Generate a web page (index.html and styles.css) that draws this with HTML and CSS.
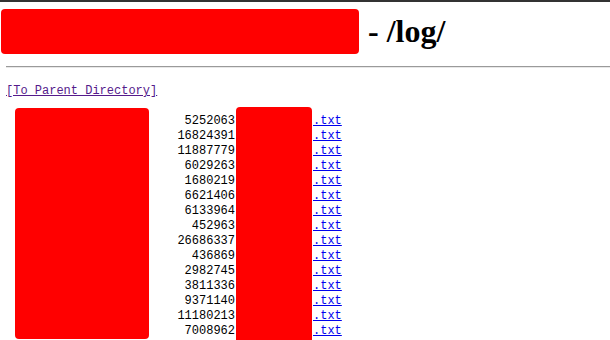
FILE: index.html
```html
<!DOCTYPE html>
<html lang="en">

<head>
    <meta charset="UTF-8">
    <title>/log/</title>
    <link rel="stylesheet" href="styles.css">
</head>

<body>
    <h1 class="title">
        <span class="redact host"></span>
        <span class="path">- /log/</span>
    </h1>
    <hr class="rule">

    <div class="parent"><a href="/">[To Parent Directory]</a></div>

    <div class="listing">
        <div class="redact dates"></div>
        <div class="sizes">
            <div>5252063</div>
            <div>16824391</div>
            <div>11887779</div>
            <div>6029263</div>
            <div>1680219</div>
            <div>6621406</div>
            <div>6133964</div>
            <div>452963</div>
            <div>26686337</div>
            <div>436869</div>
            <div>2982745</div>
            <div>3811336</div>
            <div>9371140</div>
            <div>11180213</div>
            <div>7008962</div>
        </div>
        <div class="redact names"></div>
        <div class="files">
            <a href="#">.txt</a>
            <a href="#">.txt</a>
            <a href="#">.txt</a>
            <a href="#">.txt</a>
            <a href="#">.txt</a>
            <a href="#">.txt</a>
            <a href="#">.txt</a>
            <a href="#">.txt</a>
            <a href="#">.txt</a>
            <a href="#">.txt</a>
            <a href="#">.txt</a>
            <a href="#">.txt</a>
            <a href="#">.txt</a>
            <a href="#">.txt</a>
            <a href="#">.txt</a>
        </div>
    </div>
</body>

</html>
```

FILE: styles.css
```css
html,
body {
    margin: 0;
    padding: 0;
    background: #fff;
    overflow: hidden;
}

body {
    border-top: 2px solid #333;
    height: 338px;
    font-family: "Liberation Serif", serif;
    color: #000;
}

.redact {
    background: #ff0000;
    border-radius: 4px;
}

.title {
    display: flex;
    align-items: center;
    margin: 0;
    padding-top: 7px;
    font-size: 32px;
    font-weight: bold;
}

.host {
    width: 358px;
    height: 45px;
    margin-left: 1px;
}

.path {
    margin-left: 9px;
    line-height: 45px;
}

.rule {
    margin: 12px 0 0 6px;
    border: 0;
    border-top: 1px solid #9a9a9a;
    border-bottom: 1px solid #e8e8e8;
    height: 0;
}

.parent,
.listing {
    font-family: "Liberation Mono", monospace;
    font-size: 12px;
    line-height: 15px;
}

.parent {
    margin: 16px 0 0 6px;
}

.parent a {
    color: #551a8b;
}

.listing {
    display: flex;
    align-items: flex-start;
    margin-top: 8px;
}

.dates {
    width: 134px;
    height: 231px;
    margin: 1px 0 0 15px;
}

.sizes {
    width: 86px;
    padding-top: 7px;
    text-align: right;
}

.names {
    width: 76px;
    height: 240px;
    margin-left: 1px;
    border-radius: 4px 4px 0 0;
}

.files {
    display: flex;
    flex-direction: column;
    padding-top: 7px;
    margin-left: 1px;
}

.files a {
    color: #0000ee;
}
```
